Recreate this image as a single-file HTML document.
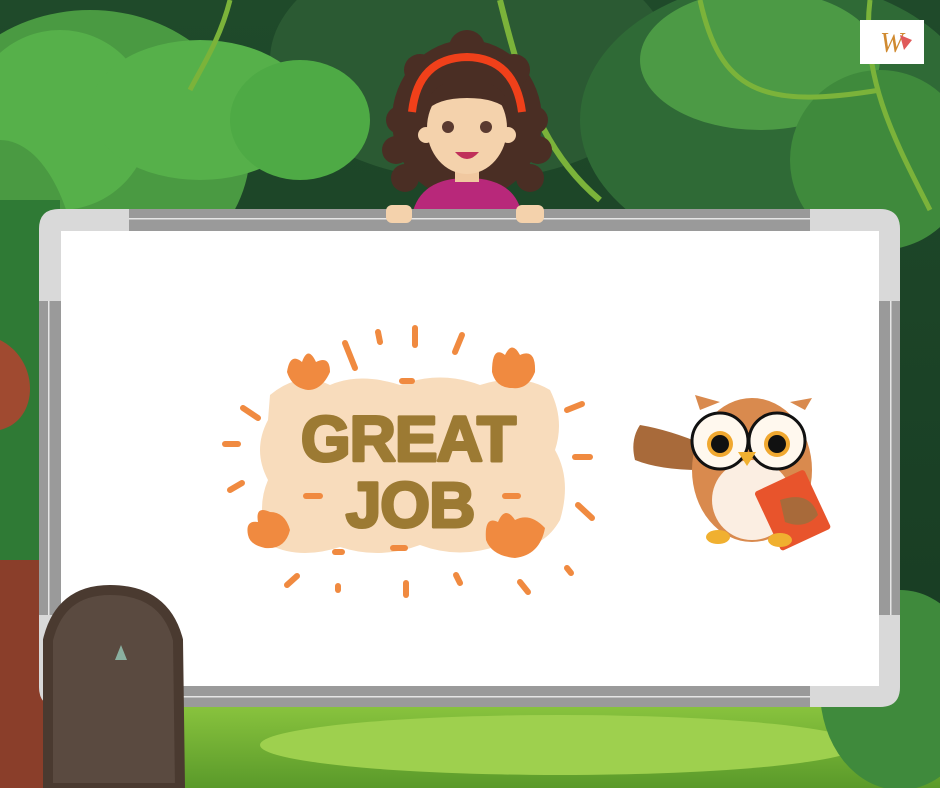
<!DOCTYPE html>
<html><head><meta charset="utf-8"><style>
html,body{margin:0;padding:0;width:940px;height:788px;overflow:hidden}
svg{display:block}
</style></head><body>
<svg width="940" height="788" viewBox="0 0 940 788" xmlns="http://www.w3.org/2000/svg">
<defs>
<linearGradient id="sky" x1="0" y1="0" x2="0" y2="1"><stop offset="0" stop-color="#1f4a2a"/><stop offset="1" stop-color="#173a22"/></linearGradient>
<linearGradient id="grass" x1="0" y1="0" x2="0" y2="1"><stop offset="0" stop-color="#8cc63f"/><stop offset="1" stop-color="#5a9a2a"/></linearGradient>
</defs>
<rect width="940" height="788" fill="url(#sky)"/>
<ellipse cx="470" cy="60" rx="200" ry="120" fill="#2b5a33"/>
<ellipse cx="780" cy="120" rx="200" ry="140" fill="#2f6a36"/>
<ellipse cx="760" cy="60" rx="120" ry="70" fill="#4c9a45"/>
<ellipse cx="880" cy="160" rx="90" ry="90" fill="#3f8a3c"/>
<ellipse cx="90" cy="150" rx="160" ry="140" fill="#4a9a42"/>
<ellipse cx="60" cy="120" rx="90" ry="90" fill="#56b04a"/>
<ellipse cx="200" cy="110" rx="110" ry="70" fill="#56b04a"/>
<ellipse cx="300" cy="120" rx="70" ry="60" fill="#4eaa45"/>
<ellipse cx="0" cy="300" rx="80" ry="160" fill="#4a9a42"/>
<rect x="0" y="200" width="60" height="588" fill="#2f7a35"/>
<path d="M500 0 C520 80 540 150 600 200" stroke="#7bb33a" stroke-width="6" fill="none"/>
<path d="M700 0 C720 90 760 110 880 90" stroke="#7bb33a" stroke-width="5" fill="none"/>
<path d="M870 0 C860 80 900 150 930 210" stroke="#7bb33a" stroke-width="5" fill="none"/>
<path d="M230 0 C220 40 200 70 190 90" stroke="#7bb33a" stroke-width="5" fill="none"/>
<path d="M0 340 C40 360 40 420 0 430Z" fill="#a04a30"/>
<path d="M0 560 L70 560 L60 788 L0 788Z" fill="#8a3e2a"/>
<rect x="180" y="700" width="760" height="88" fill="url(#grass)"/>
<ellipse cx="560" cy="745" rx="300" ry="30" fill="#9ed04e"/>
<ellipse cx="900" cy="690" rx="80" ry="100" fill="#3f8a3c"/>
<!-- girl -->
<g fill="#4a2e24">
<ellipse cx="467" cy="120" rx="75" ry="80"/>
<circle cx="400" cy="120" r="14"/><circle cx="396" cy="150" r="14"/><circle cx="405" cy="178" r="14"/>
<circle cx="534" cy="120" r="14"/><circle cx="538" cy="150" r="14"/><circle cx="530" cy="178" r="14"/>
<circle cx="420" cy="70" r="16"/><circle cx="514" cy="70" r="16"/><circle cx="467" cy="48" r="18"/>
</g>
<path d="M412 215 Q420 178 467 178 Q515 178 522 215Z" fill="#b8287a"/>
<rect x="455" y="160" width="24" height="22" fill="#f0c8a0"/>
<ellipse cx="467" cy="128" rx="40" ry="46" fill="#f4d2ac"/>
<circle cx="426" cy="135" r="8" fill="#f4d2ac"/><circle cx="508" cy="135" r="8" fill="#f4d2ac"/>
<path d="M425 112 Q428 80 467 80 Q506 80 510 112 Q498 98 467 98 Q437 98 425 112Z" fill="#4a2e24"/>
<path d="M412 112 Q418 58 467 57 Q515 58 522 112" stroke="#f0401a" stroke-width="8" fill="none"/>
<circle cx="448" cy="127" r="6" fill="#5a3a30"/><circle cx="486" cy="127" r="6" fill="#5a3a30"/>
<path d="M455 152 Q467 166 479 152Z" fill="#c0305a"/>
<!-- board -->
<rect x="39" y="209" width="861" height="498" rx="20" fill="#9a9a9a"/>
<path d="M39 301 L39 229 Q39 209 59 209 L129 209 L129 231 L61 231 L61 301Z" fill="#d9d9d9"/>
<path d="M900 301 L900 229 Q900 209 880 209 L810 209 L810 231 L879 231 L879 301Z" fill="#d9d9d9"/>
<path d="M39 615 L39 687 Q39 707 59 707 L129 707 L129 686 L61 686 L61 615Z" fill="#d9d9d9"/>
<path d="M900 615 L900 687 Q900 707 880 707 L810 707 L810 686 L879 686 L879 615Z" fill="#d9d9d9"/>
<rect x="129" y="218" width="681" height="1.5" fill="#e6e6e6"/>
<rect x="129" y="696" width="681" height="1.5" fill="#e6e6e6"/>
<rect x="48" y="301" width="1.5" height="314" fill="#e6e6e6"/>
<rect x="890" y="301" width="1.5" height="314" fill="#e6e6e6"/>
<rect x="61" y="231" width="818" height="455" fill="#ffffff"/>
<rect x="386" y="205" width="26" height="18" rx="6" fill="#f4d2ac"/>
<rect x="516" y="205" width="28" height="18" rx="6" fill="#f4d2ac"/>
<!-- great job -->
<path d="M270 395 Q300 370 330 385 Q360 372 400 385 Q440 370 480 385 Q520 372 550 390 Q565 420 555 450 Q572 480 560 520 Q540 555 500 545 Q460 560 420 545 Q380 560 340 547 Q300 560 270 545 Q255 510 268 480 Q252 450 268 420Z" fill="#f8dcbc"/>
<g stroke="#f08a40" stroke-width="6" stroke-linecap="round">
<line x1="345" y1="343" x2="355" y2="368"/><line x1="378" y1="332" x2="380" y2="342"/><line x1="415" y1="328" x2="415" y2="345"/><line x1="462" y1="335" x2="455" y2="352"/>
<line x1="243" y1="408" x2="258" y2="418"/><line x1="225" y1="444" x2="238" y2="444"/><line x1="230" y1="490" x2="242" y2="483"/>
<line x1="567" y1="410" x2="582" y2="404"/><line x1="575" y1="457" x2="590" y2="457"/><line x1="578" y1="505" x2="592" y2="518"/>
<line x1="287" y1="585" x2="297" y2="576"/><line x1="338" y1="586" x2="338" y2="590"/><line x1="406" y1="583" x2="406" y2="595"/><line x1="456" y1="575" x2="460" y2="583"/><line x1="520" y1="582" x2="528" y2="592"/><line x1="567" y1="568" x2="571" y2="573"/>
<line x1="306" y1="496" x2="320" y2="496"/><line x1="505" y1="496" x2="518" y2="496"/><line x1="393" y1="548" x2="405" y2="548"/><line x1="335" y1="552" x2="342" y2="552"/><line x1="402" y1="381" x2="412" y2="381"/>
</g>
<g fill="#f08a40">
<path d="M287 372 Q290 352 302 362 Q308 345 316 362 Q330 355 330 372 Q322 390 308 390 Q292 388 287 372Z"/>
<path d="M492 372 Q492 345 505 355 Q512 340 520 355 Q536 348 535 372 Q528 390 512 388 Q496 388 492 372Z"/>
<path d="M248 535 Q245 520 258 522 Q255 505 270 512 Q285 512 290 530 Q285 550 265 548 Q250 545 248 535Z"/>
<path d="M486 540 Q484 515 498 522 Q505 505 515 520 Q530 512 545 528 Q540 555 515 558 Q492 556 486 540Z"/>
</g>
<g font-family="Liberation Sans, sans-serif" font-weight="bold" font-size="64" fill="#9c7a33" stroke="#9c7a33" stroke-width="3" stroke-linejoin="round" text-anchor="middle" letter-spacing="-1">
<text x="408" y="461">GREAT</text>
<text x="410" y="527">JOB</text>
</g>
<!-- owl -->
<path d="M700 470 Q660 470 635 460 Q630 440 640 425 Q670 430 705 445Z" fill="#a86a3a"/>
<ellipse cx="752" cy="470" rx="60" ry="72" fill="#d98a4e"/>
<path d="M700 410 L695 395 L720 402Z" fill="#d98a4e"/><path d="M805 410 L812 398 L790 402Z" fill="#d98a4e"/>
<ellipse cx="752" cy="500" rx="40" ry="40" fill="#fbeee2"/>
<circle cx="720" cy="441" r="28" fill="#fff8ee" stroke="#111" stroke-width="3"/>
<circle cx="777" cy="441" r="28" fill="#fff8ee" stroke="#111" stroke-width="3"/>
<circle cx="720" cy="444" r="13" fill="#f0a830"/><circle cx="720" cy="444" r="9" fill="#111"/>
<circle cx="777" cy="444" r="13" fill="#f0a830"/><circle cx="777" cy="444" r="9" fill="#111"/>
<path d="M738 452 L756 452 L747 466Z" fill="#f0b030"/>
<rect x="765" y="478" width="55" height="65" rx="3" fill="#e8542c" transform="rotate(-25 792 510)"/>
<path d="M780 500 Q810 490 818 515 Q805 530 785 522Z" fill="#a86a3a"/>
<ellipse cx="718" cy="537" rx="12" ry="7" fill="#f0b030"/><ellipse cx="780" cy="540" rx="12" ry="7" fill="#f0b030"/>
<!-- door -->
<path d="M48 788 L48 640 Q60 590 110 590 Q165 590 178 640 L180 788Z" fill="#5a4a40" stroke="#4a3a30" stroke-width="10"/>
<path d="M115 660 L121 645 L127 660Z" fill="#8ab0a0"/>
<rect x="860" y="20" width="64" height="44" fill="#fff"/>
<text x="880" y="52" font-family="Liberation Serif, serif" font-style="italic" font-size="28" fill="#d08a30">W</text>
<path d="M900 35 L912 40 L904 50Z" fill="#e05a5a"/>
</svg>
</body></html>
